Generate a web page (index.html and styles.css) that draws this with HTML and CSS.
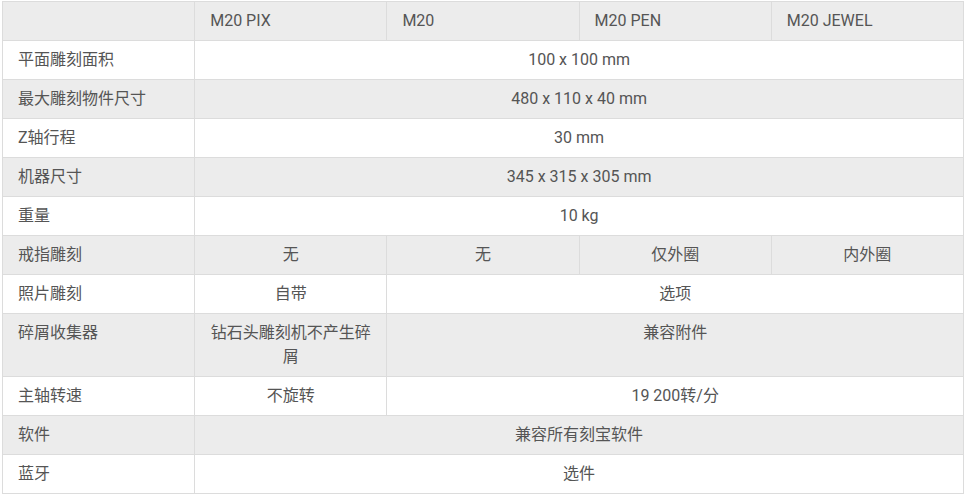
FILE: index.html
```html
<!DOCTYPE html>
<html lang="zh">
<head>
<meta charset="utf-8">
<link rel="stylesheet" href="styles.css">
</head>
<body>
<table class="spec">
  <colgroup><col class="c"><col class="c"><col class="c"><col class="c"><col class="c"></colgroup>
  <thead>
    <tr class="alt"><th></th><th>M20 PIX</th><th>M20</th><th>M20 PEN</th><th>M20 JEWEL</th></tr>
  </thead>
  <tbody>
    <tr><td class="lbl">平面雕刻面积</td><td colspan="4">100 x 100 mm</td></tr>
    <tr class="alt"><td class="lbl">最大雕刻物件尺寸</td><td colspan="4">480 x 110 x 40 mm</td></tr>
    <tr><td class="lbl">Z轴行程</td><td colspan="4">30 mm</td></tr>
    <tr class="alt"><td class="lbl">机器尺寸</td><td colspan="4">345 x 315 x 305 mm</td></tr>
    <tr><td class="lbl">重量</td><td colspan="4">10 kg</td></tr>
    <tr class="alt"><td class="lbl">戒指雕刻</td><td>无</td><td>无</td><td>仅外圈</td><td>内外圈</td></tr>
    <tr><td class="lbl">照片雕刻</td><td>自带</td><td colspan="3">选项</td></tr>
    <tr class="alt"><td class="lbl">碎屑收集器</td><td>钻石头雕刻机不产生碎屑</td><td colspan="3">兼容附件</td></tr>
    <tr><td class="lbl">主轴转速</td><td>不旋转</td><td colspan="3">19 200转/分</td></tr>
    <tr class="alt"><td class="lbl">软件</td><td colspan="4">兼容所有刻宝软件</td></tr>
    <tr><td class="lbl">蓝牙</td><td colspan="4">选件</td></tr>
  </tbody>
</table>
</body>
</html>
```
FILE: styles.css
```css
html, body {
  margin: 0;
  padding: 0;
  background: #fff;
}
body {
  padding: 1px 2px;
}
.spec {
  border-collapse: collapse;
  table-layout: fixed;
  width: 962px;
  font-family: Roboto, "Noto Sans CJK SC", sans-serif;
  font-size: 16px;
  color: #555;
}
.spec .c {
  width: 192px;
}
.spec th,
.spec td {
  border: 1px solid #dcdcdc;
  padding: 7px 15px;
  line-height: 24px;
  font-weight: normal;
  vertical-align: top;
  text-align: center;
}
.spec th {
  text-align: left;
}
.spec td.lbl {
  text-align: left;
}
.spec tr.alt {
  background: #ececec;
}
```
